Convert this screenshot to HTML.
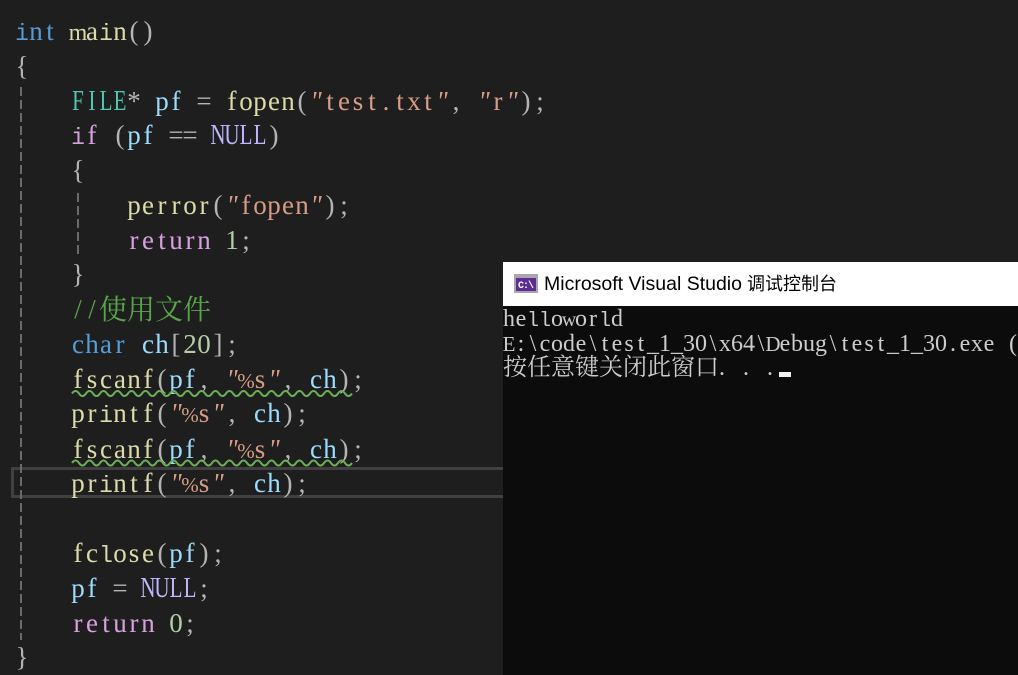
<!DOCTYPE html>
<html><head><meta charset="utf-8"><style>
html,body{margin:0;padding:0;background:#1e1e1e;width:1018px;height:675px;overflow:hidden}
svg{position:absolute;left:0;top:0;display:block}
text{white-space:pre;font-family:"Liberation Serif","Noto Serif CJK SC",serif;font-size:27px}
.code text{text-anchor:middle}
.caps text{font-size:28px;text-anchor:middle}
.k{fill:#569cd6}.f{fill:#dcdcaa}.p{fill:#b4b4b4}.t{fill:#4ec9b0}.v{fill:#9cdcfe}.s{fill:#d69d85}.c{fill:#d8a0df}.m{fill:#beb7ff}.n{fill:#b5cea8}.g{fill:#57a64a}
.q{font-style:italic}
.pc{font-size:21px}
.h{font-family:"Liberation Mono",monospace;font-size:23px}
.w{font-size:24px}
.con text{font-size:24px;fill:#cccccc;text-anchor:middle}
.con .h{font-size:20px}
.con .w{font-size:20px}
.con .u{font-size:21px}
.cj{font-family:"Noto Serif CJK SC",serif;font-size:28px}
.cjc{font-family:"Noto Serif CJK SC",serif;font-size:24px;fill:#cccccc}
.ti{font-family:"Liberation Sans","Noto Sans CJK SC",sans-serif;font-size:19.5px;fill:#000}
.ti2{font-size:18px}
</style></head><body>
<svg width="1018" height="675" viewBox="0 0 1018 675">
<rect width="1018" height="675" fill="#1e1e1e"/>
<rect x="12.500" y="468.500" width="492" height="28" fill="none" stroke="#404040" stroke-width="3"/>
<line x1="21" y1="87" x2="21" y2="640" stroke="#6a6a6a" stroke-width="2" stroke-dasharray="9 4"/>
<line x1="78" y1="193" x2="78" y2="257" stroke="#6a6a6a" stroke-width="2" stroke-dasharray="9 4"/>

<g class="code">
<text y="40"><tspan class="k h" x="22">i</tspan><tspan class="k" x="36 50 64">nt </tspan><tspan class="f w" x="78">m</tspan><tspan class="f" x="92">a</tspan><tspan class="f h" x="106">i</tspan><tspan class="f" x="120">n</tspan><tspan class="p" x="134 148">()</tspan></text>
<text y="75" x="22" class="p">{</text>
<text y="110"><tspan class="p" x="134 148">* </tspan><tspan class="v" x="162 176 190">pf </tspan><tspan class="p" x="204 218">= </tspan><tspan class="f" x="232 246 260 274 288">fopen</tspan><tspan class="p" x="302">(</tspan><tspan class="s q" x="316">"</tspan><tspan class="s" x="330 344 358 372 386 400 414 428">test.txt</tspan><tspan class="s q" x="442">"</tspan><tspan class="p" x="456 470">, </tspan><tspan class="s q" x="484">"</tspan><tspan class="s" x="498">r</tspan><tspan class="s q" x="512">"</tspan><tspan class="p" x="526 540">);</tspan></text>
<text y="144"><tspan class="c h" x="78">i</tspan><tspan class="c" x="92 106">f </tspan><tspan class="p" x="120">(</tspan><tspan class="v" x="134 148">pf</tspan><tspan class="p" x="162 176 190 204"> == </tspan><tspan class="p" x="274">)</tspan></text>
<text y="179" x="78" class="p">{</text>
<text y="214"><tspan class="f" x="134 148 162 176 190 204">perror</tspan><tspan class="p" x="218">(</tspan><tspan class="s q" x="232">"</tspan><tspan class="s" x="246 260 274 288 302">fopen</tspan><tspan class="s q" x="316">"</tspan><tspan class="p" x="330 344">);</tspan></text>
<text y="249"><tspan class="c" x="134 148 162 176 190 204 218">return </tspan><tspan class="n" x="232">1</tspan><tspan class="p" x="246">;</tspan></text>
<text y="283" x="78" class="p">}</text>
<text y="318" class="g" x="78 92">//</text>
<text y="353"><tspan class="k" x="78 92 106 120 134">char </tspan><tspan class="v" x="148 162">ch</tspan><tspan class="p" x="176">[</tspan><tspan class="n" x="190 204">20</tspan><tspan class="p" x="218 232">];</tspan></text>
<text y="388"><tspan class="f" x="78 92 106 120 134 148">fscanf</tspan><tspan class="p" x="162">(</tspan><tspan class="v" x="176 190">pf</tspan><tspan class="p" x="204 218">, </tspan><tspan class="s q" x="232">"</tspan><tspan class="s pc" x="246">%</tspan><tspan class="s" x="260">s</tspan><tspan class="s q" x="274">"</tspan><tspan class="p" x="288 302">, </tspan><tspan class="v" x="316 330">ch</tspan><tspan class="p" x="344 358">);</tspan></text>
<text y="422"><tspan class="f" x="78 92">pr</tspan><tspan class="f h" x="106">i</tspan><tspan class="f" x="120 134 148">ntf</tspan><tspan class="p" x="162">(</tspan><tspan class="s q" x="176">"</tspan><tspan class="s pc" x="190">%</tspan><tspan class="s" x="204">s</tspan><tspan class="s q" x="218">"</tspan><tspan class="p" x="232 246">, </tspan><tspan class="v" x="260 274">ch</tspan><tspan class="p" x="288 302">);</tspan></text>
<text y="458"><tspan class="f" x="78 92 106 120 134 148">fscanf</tspan><tspan class="p" x="162">(</tspan><tspan class="v" x="176 190">pf</tspan><tspan class="p" x="204 218">, </tspan><tspan class="s q" x="232">"</tspan><tspan class="s pc" x="246">%</tspan><tspan class="s" x="260">s</tspan><tspan class="s q" x="274">"</tspan><tspan class="p" x="288 302">, </tspan><tspan class="v" x="316 330">ch</tspan><tspan class="p" x="344 358">);</tspan></text>
<text y="492"><tspan class="f" x="78 92">pr</tspan><tspan class="f h" x="106">i</tspan><tspan class="f" x="120 134 148">ntf</tspan><tspan class="p" x="162">(</tspan><tspan class="s q" x="176">"</tspan><tspan class="s pc" x="190">%</tspan><tspan class="s" x="204">s</tspan><tspan class="s q" x="218">"</tspan><tspan class="p" x="232 246">, </tspan><tspan class="v" x="260 274">ch</tspan><tspan class="p" x="288 302">);</tspan></text>
<text y="562"><tspan class="f" x="78 92">fc</tspan><tspan class="f h" x="106">l</tspan><tspan class="f" x="120 134 148">ose</tspan><tspan class="p" x="162">(</tspan><tspan class="v" x="176 190">pf</tspan><tspan class="p" x="204 218">);</tspan></text>
<text y="597"><tspan class="v" x="78 92 106">pf </tspan><tspan class="p" x="120 134">= </tspan><tspan class="p" x="204">;</tspan></text>
<text y="632"><tspan class="c" x="78 92 106 120 134 148 162">return </tspan><tspan class="n" x="176">0</tspan><tspan class="p" x="190">;</tspan></text>
<text y="666" x="22" class="p">}</text>
</g>
<g class="caps" transform="scale(.75 1)">
<text y="110" class="t" x="104 122.670 141.330 160">FILE</text>
<text y="144" class="m" x="290.670 309.330 328 346.670">NULL</text>
<text y="597" class="m" x="197.330 216 234.670 253.330">NULL</text>
</g>
<text x="99" y="319" class="g cj">使用文件</text>

<path d="M72 393.500q3.500 -5 7 0t7 0t7 0t7 0t7 0t7 0t7 0t7 0t7 0t7 0t7 0t7 0t7 0t7 0t7 0t7 0t7 0t7 0t7 0t7 0t7 0t7 0t7 0t7 0t7 0t7 0t7 0t7 0t7 0t7 0t7 0t7 0t7 0t7 0t7 0t7 0t7 0t7 0t7 0t7 0" fill="none" stroke="#6cae55" stroke-width="2"/>
<path d="M72 463q3.500 -5 7 0t7 0t7 0t7 0t7 0t7 0t7 0t7 0t7 0t7 0t7 0t7 0t7 0t7 0t7 0t7 0t7 0t7 0t7 0t7 0t7 0t7 0t7 0t7 0t7 0t7 0t7 0t7 0t7 0t7 0t7 0t7 0t7 0t7 0t7 0t7 0t7 0t7 0t7 0t7 0" fill="none" stroke="#6cae55" stroke-width="2"/>

<rect x="503" y="262" width="515" height="413" fill="#0c0c0c"/>
<rect x="503" y="262" width="515" height="44" fill="#ffffff"/>
<rect x="514" y="274" width="24" height="19" fill="#a9a7ad"/>
<rect x="516" y="278" width="20" height="13" fill="#5c2d91"/>
<text x="518" y="288" style="font-family:'Liberation Mono',monospace;font-size:10px;font-weight:bold;fill:#fff" textLength="16">C:\</text>
<text y="290" class="ti"><tspan x="544">Microsoft Visual Studio </tspan><tspan class="ti2" x="747">调试控制台</tspan></text>

<g class="con">
<text y="326"><tspan x="509 521">he</tspan><tspan class="h" x="533 545">ll</tspan><tspan x="557">o</tspan><tspan class="w" x="569">w</tspan><tspan x="581 593">or</tspan><tspan class="h" x="605">l</tspan><tspan x="617">d</tspan></text>
<text y="351"><tspan class="u" x="509">E</tspan><tspan x="521 533 545 557 569 581 593 605 617 629 641 653 665 677 689 701 713 725 737 749 761">:\code\test_1_30\x64\</tspan><tspan class="u" x="773">D</tspan><tspan x="785 797 809 821 833 845 857 869 881 893 905 917 929 941 953 965 977 989 1001 1013">ebug\test_1_30.exe (</tspan></text>
<text y="375" x="722 734 746 758 770">. . .</text>
</g>
<text x="503" y="375" class="cjc">按任意键关闭此窗口</text>
<rect x="779" y="372" width="12" height="5" fill="#f2f2f2"/>
</svg>
</body></html>
